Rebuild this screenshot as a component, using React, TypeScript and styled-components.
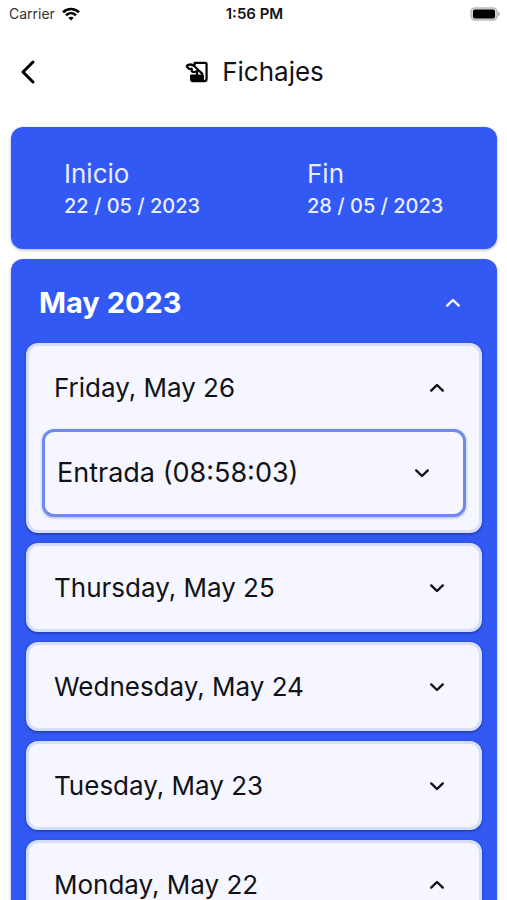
import React, { useState } from "react";
import styled, { createGlobalStyle, css } from "styled-components";

const GlobalStyle = createGlobalStyle`
  *, *::before, *::after { box-sizing: border-box; }
  body {
    margin: 0;
    background: #ffffff;
    color: #111217;
    font-family: Inter, "Liberation Sans", sans-serif;
  }
  button { font: inherit; color: inherit; }
`;

const Screen = styled.div`
  height: 100vh;
  display: flex;
  flex-direction: column;
  overflow: hidden;
`;

const StatusBar = styled.div`
  display: grid;
  grid-template-columns: 1fr auto 1fr;
  align-items: center;
  height: 28px;
  flex: none;
  padding: 0 7px 0 9px;
  font-size: 14px;
  line-height: 16px;
`;

const Carrier = styled.span`
  display: flex;
  align-items: center;
  gap: 7px;
  color: #333333;
`;

const Clock = styled.time`
  font-size: 15px;
  font-weight: 600;
`;

const Battery = styled.svg`
  justify-self: end;
  display: block;
`;

const Header = styled.header`
  display: grid;
  grid-template-columns: 48px 1fr 48px;
  align-items: center;
  height: 88px;
  flex: none;
  padding: 0 4px;
`;

const BackButton = styled.button`
  display: grid;
  place-items: center;
  width: 48px;
  height: 48px;
  padding: 0;
  border: 0;
  background: none;
  cursor: pointer;
`;

const Title = styled.h1`
  display: flex;
  align-items: center;
  justify-content: center;
  gap: 11px;
  margin: 0;
  font-size: 26px;
  line-height: 32px;
  font-weight: 400;
`;

const Content = styled.main`
  flex: 1;
  min-height: 0;
  overflow-y: auto;
  scrollbar-width: none;
  display: flex;
  flex-direction: column;
  gap: 10px;
  padding: 11px 10px 10px 11px;
`;

const panel = css`
  flex: none;
  border-radius: 12px;
  background: #3259f4;
  color: #ffffff;
  box-shadow: 0 1px 3px rgba(30, 50, 130, 0.4);
`;

const RangePanel = styled.section`
  ${panel}
  display: grid;
  grid-template-columns: 1fr 1fr;
  height: 122px;
  padding-top: 30px;
`;

const DateButton = styled.button`
  display: flex;
  flex-direction: column;
  align-items: flex-start;
  padding: 0 0 0 53px;
  border: 0;
  background: none;
  color: #e9edff;
  text-align: left;
  cursor: pointer;
`;

const DateLabel = styled.span`
  font-size: 26px;
  line-height: 34px;
`;

const DateValue = styled.span`
  font-size: 20px;
  line-height: 30px;
  font-weight: 500;
  white-space: nowrap;
`;

const MonthPanel = styled.section`
  ${panel}
  padding-bottom: 15px;
`;

const Heading = styled.h2`
  margin: 0;
  font: inherit;
`;

const levels = {
  month: css`
    height: 84px;
    padding: 4px 36px 0 28px;
    font-size: 29px;
    font-weight: 700;
  `,
  day: css`
    height: 83px;
    padding: 0 34px 0 25px;
    font-size: 26px;
    font-weight: 400;
  `,
  entry: css`
    height: 82px;
    padding: 0 33px 0 12px;
    font-size: 27px;
    font-weight: 400;
  `,
};

const Toggle = styled.button<{ $level: keyof typeof levels }>`
  display: flex;
  align-items: center;
  justify-content: space-between;
  width: 100%;
  border: 0;
  background: none;
  line-height: 32px;
  text-align: left;
  white-space: nowrap;
  cursor: pointer;
  ${({ $level }) => levels[$level]}
`;

const DayList = styled.div`
  display: flex;
  flex-direction: column;
  gap: 10px;
  padding: 0 15px;
`;

const DayCard = styled.article`
  border: 3px solid #d6defd;
  border-radius: 12px;
  background: #f5f6ff;
  color: #111217;
  box-shadow: 0 1px 3px rgba(10, 25, 100, 0.6);
`;

const Entries = styled.div`
  display: flex;
  flex-direction: column;
  gap: 10px;
  padding: 0 13px 13px;
`;

const EntryCard = styled.div`
  border: 3px solid #6f89f0;
  border-radius: 12px;
  box-shadow: 0 1px 3px rgba(40, 60, 150, 0.35);
  background: #f5f6ff;
`;

const Chevron = ({ open }: { open: boolean }) => (
  <svg width="16" height="10" viewBox="0 0 16 10" fill="none" stroke="currentColor" strokeWidth="2.4" strokeLinecap="round" strokeLinejoin="round" aria-hidden="true">
    <path d={open ? "M2.200 7.600L8 2l5.800 5.600" : "M2.200 2.400L8 8l5.800-5.600"} />
  </svg>
);

const HistoryIcon = () => (
  <svg width="28" height="28" viewBox="0 0 24 24" fill="none" stroke="#000" strokeWidth="1.9" strokeLinejoin="round" aria-hidden="true">
    <path d="M10 6.500V4.200h9c.8 0 1.200.4 1.200 1.200V18c0 1.100-.9 1.900-2 1.900" />
    <path d="M7 15h10v3c0 .8.500 1.400 1.200 1.900H8.500C7.600 19.900 7 19.200 7 18.300z" fill="#000" />
    <path d="M2.800 7c2.400-1.900 5.300-1.500 7.200.3l7 6.700M2.800 7l2.600 2.400h2.100v2c1.700 1 3.700.7 5.300-.9" />
    <path d="M12 11.500V15" />
  </svg>
);

type AccordionProps = {
  label: string;
  level: keyof typeof levels;
  initialOpen?: boolean;
  children?: React.ReactNode;
};

function Accordion({ label, level, initialOpen = false, children }: AccordionProps) {
  const [open, setOpen] = useState(initialOpen);
  return (
    <>
      <Heading as={level === "month" ? "h2" : level === "day" ? "h3" : "h4"}>
        <Toggle $level={level} aria-expanded={open} onClick={() => setOpen(!open)}>
          {label}
          <Chevron open={open} />
        </Toggle>
      </Heading>
      {open && children}
    </>
  );
}

const days = [
  { label: "Friday, May 26", open: true, entries: ["Entrada (08:58:03)"] },
  { label: "Thursday, May 25", open: false, entries: [] },
  { label: "Wednesday, May 24", open: false, entries: [] },
  { label: "Tuesday, May 23", open: false, entries: [] },
  { label: "Monday, May 22", open: true, entries: [] },
];

export default function App() {
  return (
    <Screen>
      <GlobalStyle />
      <StatusBar>
        <Carrier>
          Carrier
          <svg width="18" height="14" viewBox="0 0 18 14" fill="none" stroke="#000" strokeWidth="2.6" aria-label="Wi-Fi">
            <path d="M1 5.2C5.5.9 12.500.9 17 5.200" />
            <path d="M4 8.300c2.900-2.700 7.100-2.700 10 0" />
            <path d="M6.300 10.700c1.600-1.400 3.800-1.400 5.400 0L9 13.400z" fill="#000" stroke="none" />
          </svg>
        </Carrier>
        <Clock>1:56 PM</Clock>
        <Battery width="30" height="15" viewBox="0 0 30 15" aria-label="Battery full">
          <rect x="1" y="1" width="26" height="12" rx="4" fill="#d8d8d8" stroke="#bdbdbd" strokeWidth="1.600" />
          <rect x="3" y="2.500" width="22" height="9" rx="2" fill="#000" />
          <path d="M28 4.500v5c2.500-.8 2.500-4.200 0-5z" fill="#b5b5b5" />
        </Battery>
      </StatusBar>
      <Header>
        <BackButton aria-label="Volver">
          <svg width="16" height="24" viewBox="0 0 16 24" fill="none" stroke="#000" strokeWidth="3" strokeLinecap="round" strokeLinejoin="round">
            <path d="M13 2L3 12l10 10" />
          </svg>
        </BackButton>
        <Title>
          <HistoryIcon />
          Fichajes
        </Title>
      </Header>
      <Content>
        <RangePanel>
          <DateButton>
            <DateLabel>Inicio</DateLabel>
            <DateValue>22 / 05 / 2023</DateValue>
          </DateButton>
          <DateButton>
            <DateLabel>Fin</DateLabel>
            <DateValue>28 / 05 / 2023</DateValue>
          </DateButton>
        </RangePanel>
        <MonthPanel>
          <Accordion level="month" label="May 2023" initialOpen>
            <DayList>
              {days.map((day) => (
                <DayCard key={day.label}>
                  <Accordion level="day" label={day.label} initialOpen={day.open}>
                    <Entries>
                      {day.entries.map((entry) => (
                        <EntryCard key={entry}>
                          <Accordion level="entry" label={entry} />
                        </EntryCard>
                      ))}
                    </Entries>
                  </Accordion>
                </DayCard>
              ))}
            </DayList>
          </Accordion>
        </MonthPanel>
      </Content>
    </Screen>
  );
}
